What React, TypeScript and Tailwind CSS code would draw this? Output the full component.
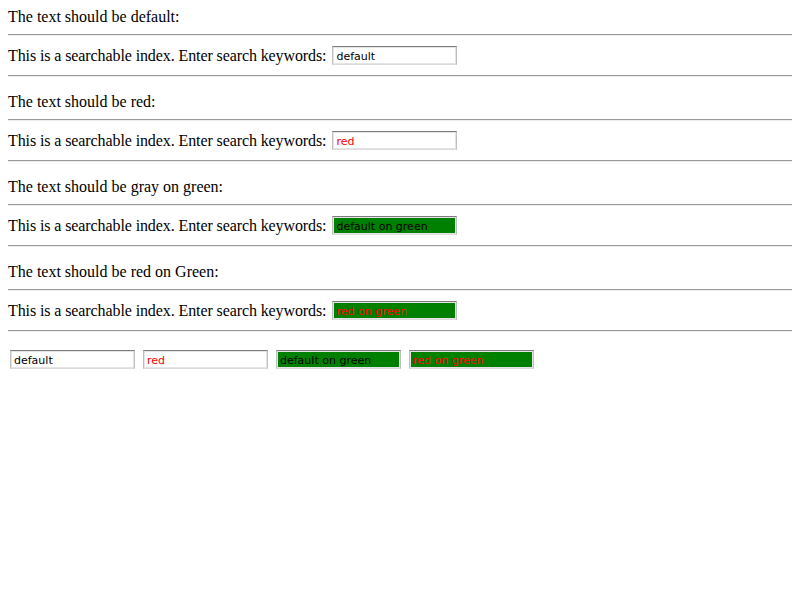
const sections = [
  { label: "The text should be default:", value: "default", box: "bg-white text-black" },
  { label: "The text should be red:", value: "red", box: "bg-white text-[#ff0000]" },
  { label: "The text should be gray on green:", value: "default on green", box: "bg-[#008000] text-black" },
  { label: "The text should be red on Green:", value: "red on green", box: "bg-[#008000] text-[#ff0000]" },
];

function SearchBox({ value, box }: { value: string; box: string }) {
  return (
    <input
      readOnly
      value={value}
      className={`m-[2px] box-border h-[19px] w-[125px] border border-t-[#7c7c7c] border-x-[#c0c0c0] border-b-[#dcdcdc] px-[3px] pt-[1px] font-['DejaVu_Sans',sans-serif] text-[11px] leading-[15px] shadow-[inset_0_0_0_1px_#e4e4e4] outline-none ${box}`}
    />
  );
}

function Rule() {
  return <div className="h-0 border-t border-b border-t-[#9a9a9a] border-b-[#eeeeee]" />;
}

export default function App() {
  return (
    <div className="min-h-[600px] bg-white p-2 font-['Liberation_Serif',serif] text-[16px] leading-[18px] text-black">
      {sections.map((s, i) => (
        <div key={s.value} className={i > 0 ? "mt-4" : ""}>
          <div className="h-[18px]">{s.label}</div>
          <div className="mt-2">
            <Rule />
          </div>
          <div className="my-2 flex h-[23px] items-center">
            <span className="mr-[4px] tracking-[-0.1px]">This is a searchable index. Enter search keywords:</span>
            <SearchBox value={s.value} box={s.box} />
          </div>
          <Rule />
        </div>
      ))}
      <div className="mt-4 flex h-[23px] items-center gap-[4px]">
        {sections.map((s) => (
          <SearchBox key={s.value} value={s.value} box={s.box} />
        ))}
      </div>
    </div>
  );
}
